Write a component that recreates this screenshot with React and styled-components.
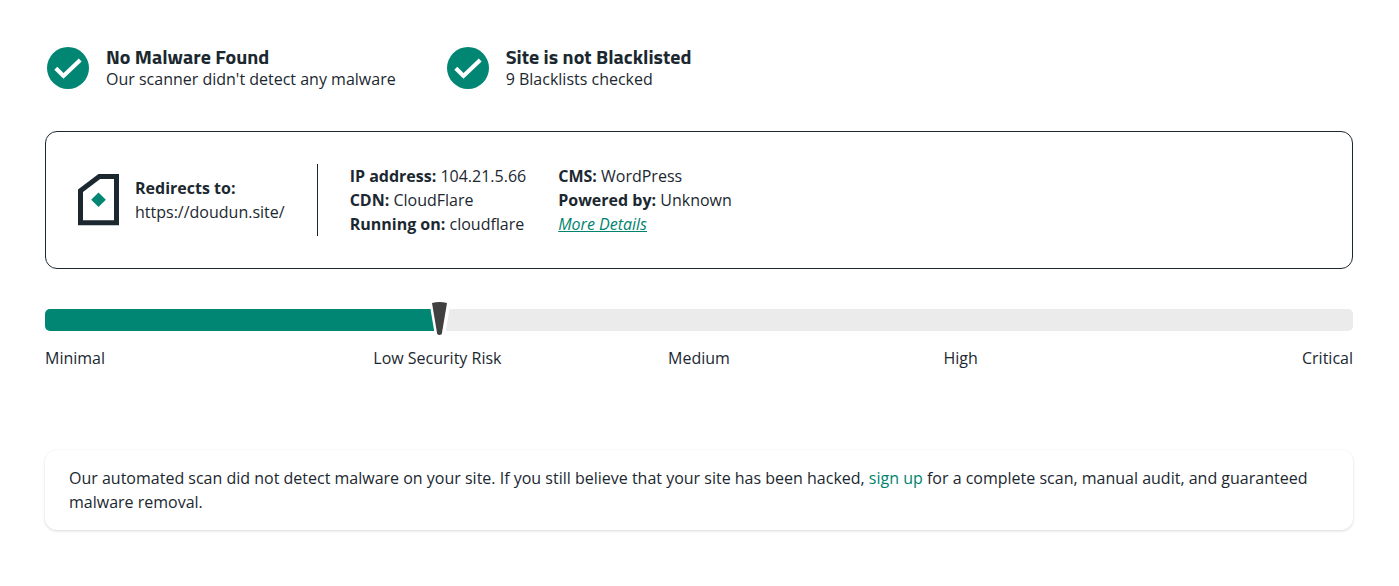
import React from "react";
import styled, { createGlobalStyle } from "styled-components";

const GlobalStyle = createGlobalStyle`
  * {
    box-sizing: border-box;
  }
  body {
    margin: 0;
    background: #fff;
    color: #1b2830;
    font-family: "Open Sans", sans-serif;
    font-size: 16px;
    line-height: 24px;
  }
`;

const Page = styled.main`
  padding: 46px 46px 56px 45px;
`;

const StatusRow = styled.section`
  display: flex;
  flex-wrap: wrap;
  gap: 51px;
  padding-left: 2px;
`;

const Status = styled.div`
  display: flex;
  align-items: center;
  gap: 17px;
`;

const StatusTitle = styled.h2`
  margin: 0;
  font-family: "Titillium Web", Roboto, sans-serif;
  font-size: 20px;
  font-weight: 700;
  line-height: 22px;
`;

const StatusText = styled.p`
  margin: 0;
  line-height: 22px;
`;

const SiteCard = styled.section`
  display: flex;
  flex-wrap: wrap;
  align-items: center;
  gap: 32px;
  margin-top: 41px;
  padding: 32px;
  border: 1px solid #1b2830;
  border-radius: 12px;
`;

const SiteInfo = styled.div`
  display: flex;
  align-items: center;
  gap: 16px;
`;

const Details = styled.div`
  display: flex;
  gap: 32px;
  padding-left: 32px;
  border-left: 1px solid #1b2830;
`;

const Line = styled.div`
  min-height: 24px;
`;

const DetailsLink = styled.a`
  color: #00836f;
  font-style: italic;
`;

const Meter = styled.section`
  margin-top: 40px;
`;

const Track = styled.div`
  position: relative;
  height: 22px;
  border-radius: 5px;
  background: #ebebeb;
`;

const Fill = styled.div`
  width: ${props => props.$level}%;
  height: 100%;
  border-radius: 5px 0 0 5px;
  background: #008672;
`;

const Pointer = styled.svg`
  position: absolute;
  top: -9px;
  left: ${props => props.$level}%;
  margin-left: -8px;
`;

const Labels = styled.div`
  display: grid;
  grid-template-columns: repeat(5, 1fr);
  margin-top: 15px;
  text-align: center;
`;

const Label = styled.span`
  &:first-child {
    text-align: left;
  }
  &:last-child {
    text-align: right;
  }
`;

const Notice = styled.p`
  margin: 80px 0 0;
  padding: 16px 24px;
  border-radius: 12px;
  box-shadow: 0 1px 3px rgba(0, 0, 0, 0.16);
`;

const SignUp = styled.a`
  color: #00836f;
  text-decoration: none;
`;

const CheckIcon = () => (
  <svg width="42" height="42" viewBox="0 0 42 42" aria-hidden="true">
    <circle cx="21" cy="21" r="21" fill="#008672" />
    <path d="M8.8 21.2l7.7 7.7L33.2 13" fill="none" stroke="#fff" strokeWidth="4.2" />
  </svg>
);

const SiteIcon = () => (
  <svg width="41" height="52" viewBox="0 0 41 52" aria-hidden="true">
    <path d="M2.5 16.8L21.3 2.5H38.5V48.8H2.5z" fill="none" stroke="#1b2830" strokeWidth="5" />
    <path d="M20.5 18.5l7.3 7.3-7.3 7.3-7.3-7.3z" fill="#008672" />
  </svg>
);

const statuses = [
  { title: "No Malware Found", text: "Our scanner didn't detect any malware" },
  { title: "Site is not Blacklisted", text: "9 Blacklists checked" }
];

const levels = ["Minimal", "Low Security Risk", "Medium", "High", "Critical"];

export default function App() {
  const level = 30;

  return (
    <Page>
      <GlobalStyle />
      <StatusRow>
        {statuses.map(status => (
          <Status key={status.title}>
            <CheckIcon />
            <div>
              <StatusTitle>{status.title}</StatusTitle>
              <StatusText>{status.text}</StatusText>
            </div>
          </Status>
        ))}
      </StatusRow>
      <SiteCard>
        <SiteInfo>
          <SiteIcon />
          <div>
            <Line>
              <b>Redirects to:</b>
            </Line>
            <Line>https://doudun.site/</Line>
          </div>
        </SiteInfo>
        <Details>
          <div>
            <Line>
              <b>IP address:</b> 104.21.5.66
            </Line>
            <Line>
              <b>CDN:</b> CloudFlare
            </Line>
            <Line>
              <b>Running on:</b> cloudflare
            </Line>
          </div>
          <div>
            <Line>
              <b>CMS:</b> WordPress
            </Line>
            <Line>
              <b>Powered by:</b> Unknown
            </Line>
            <Line>
              <DetailsLink href="#details">More Details</DetailsLink>
            </Line>
          </div>
        </Details>
      </SiteCard>
      <Meter>
        <Track>
          <Fill $level={level} />
          <Pointer $level={level} width="22" height="36" viewBox="0 0 22 36">
            <path d="M0 0H22L16 36H6z" fill="#fff" />
            <path d="M3 3Q10.5 1.2 18 3L12.8 34Q10.5 36 8.2 34z" fill="#404040" />
          </Pointer>
        </Track>
        <Labels>
          {levels.map(name => (
            <Label key={name}>{name}</Label>
          ))}
        </Labels>
      </Meter>
      <Notice>
        Our automated scan did not detect malware on your site. If you still
        believe that your site has been hacked,{" "}
        <SignUp href="#signup">sign up</SignUp> for a complete scan, manual
        audit, and guaranteed malware removal.
      </Notice>
    </Page>
  );
}
